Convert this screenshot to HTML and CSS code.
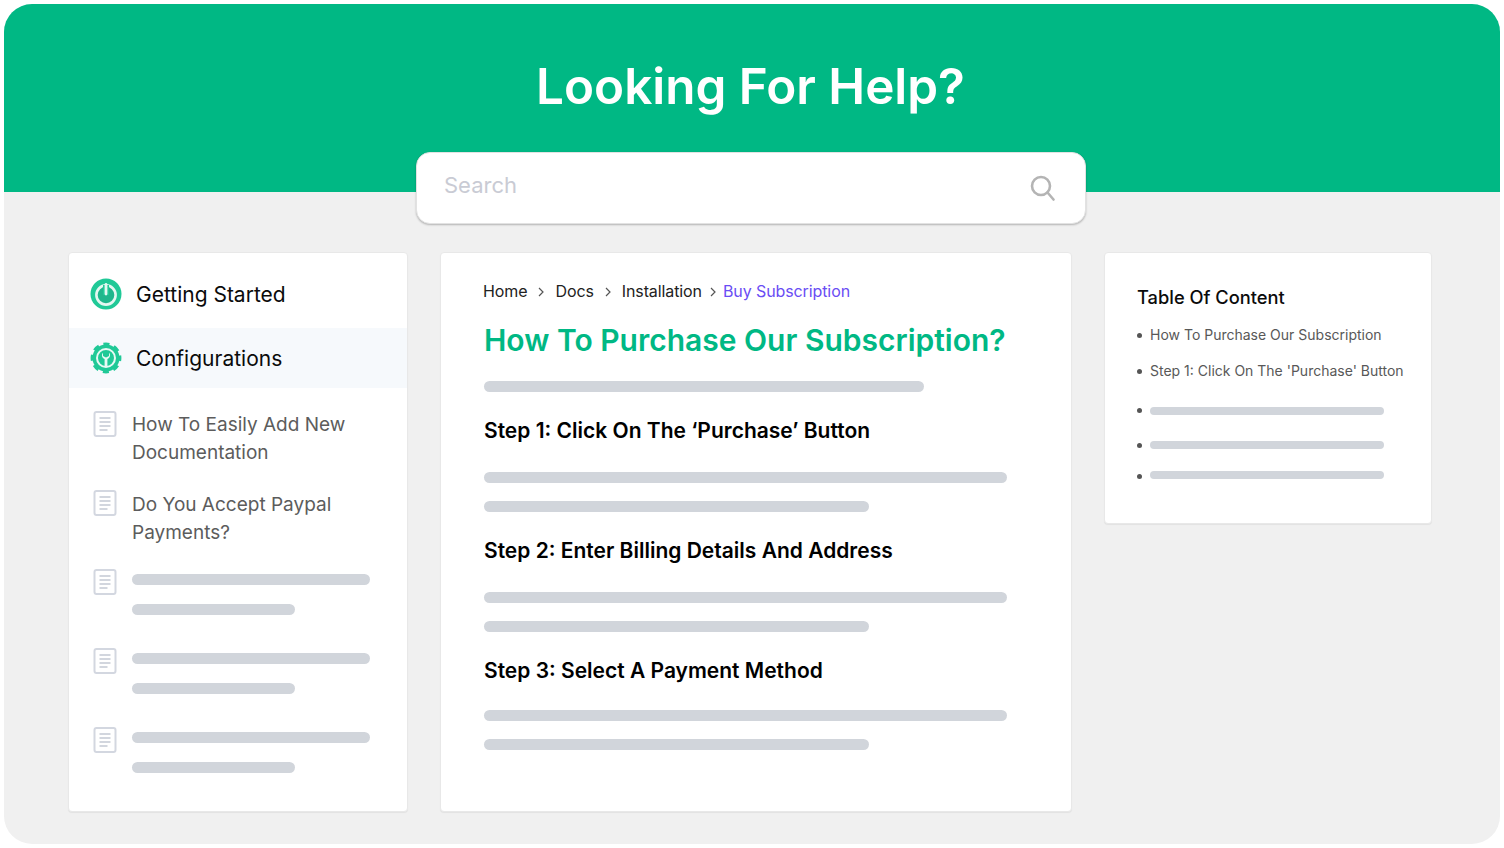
FILE: index.html
```html
<!DOCTYPE html>
<html lang="en">
<head>
    <meta charset="UTF-8">
    <meta name="viewport" content="width=device-width, initial-scale=1.0">
    <title>Looking For Help?</title>
    <link rel="stylesheet" href="styles.css">
</head>
<body>
    <div class="frame">
        <header class="hero">
            <h1>Looking For Help?</h1>
        </header>
        <div class="search-box">
            <span class="search-text">Search</span>
            <svg class="search-icon" width="26" height="26" viewBox="0 0 26 26" fill="none" stroke="#b4b4b4" stroke-width="2.6" stroke-linecap="round">
                <circle cx="11" cy="11" r="9"/>
                <path d="M17.500 17.500L23.500 24.500"/>
            </svg>
        </div>
        <div class="columns">
            <aside class="card side">
                <div class="cat">
                    <svg class="cat-icon" width="32" height="32" viewBox="0 0 32 32">
                        <circle cx="16" cy="16" r="15.500" fill="#20c997"/>
                        <circle cx="16" cy="17" r="9.600" fill="#1fb68c" stroke="#e4f7f1" stroke-width="2.600"/>
                        <path d="M16 7v10" stroke="#20c997" stroke-width="6"/>
                        <path d="M16 6.500V16" stroke="#e4f7f1" stroke-width="2.800" stroke-linecap="round"/>
                    </svg>
                    <span>Getting Started</span>
                </div>
                <div class="cat cat-active">
                    <svg class="cat-icon" width="32" height="32" viewBox="0 0 32 32">
                        <circle cx="16" cy="16" r="13.500" fill="#20c997"/>
                        <circle cx="16" cy="16" r="13.700" fill="none" stroke="#20c997" stroke-width="3.400" stroke-dasharray="6 4.760" stroke-dashoffset="3"/>
                        <circle cx="16" cy="16" r="9" fill="none" stroke="#e8f9f4" stroke-width="2"/>
                        <path d="M13 10.800v3.200l3 1.500 3-1.500v-3.200c1.800 2 1.300 4.800-1.600 6.300V24h-2.800v-6.900c-2.900-1.500-3.400-4.300-1.600-6.300z" fill="#e8f9f4"/>
                    </svg>
                    <span>Configurations</span>
                </div>
                <ul class="doc-list">
                    <li class="doc">
                        <svg class="doc-icon" width="24" height="28" viewBox="0 0 24 28" fill="none">
                            <rect x="1.500" y="2" width="21" height="24" rx="2" stroke="#d3d7e0" stroke-width="2"/>
                            <path d="M6.500 8h11M6.500 12h11M6.500 16h11M6.500 20h8" stroke="#c4c9d3" stroke-width="1.400"/>
                        </svg>
                        <span class="doc-text">How To Easily Add New Documentation</span>
                    </li>
                    <li class="doc">
                        <svg class="doc-icon" width="24" height="28" viewBox="0 0 24 28" fill="none">
                            <rect x="1.500" y="2" width="21" height="24" rx="2" stroke="#d3d7e0" stroke-width="2"/>
                            <path d="M6.500 8h11M6.500 12h11M6.500 16h11M6.500 20h8" stroke="#c4c9d3" stroke-width="1.400"/>
                        </svg>
                        <span class="doc-text doc-text-second">Do You Accept Paypal Payments?</span>
                    </li>
                    <li class="doc">
                        <svg class="doc-icon" width="24" height="28" viewBox="0 0 24 28" fill="none">
                            <rect x="1.500" y="2" width="21" height="24" rx="2" stroke="#d3d7e0" stroke-width="2"/>
                            <path d="M6.500 8h11M6.500 12h11M6.500 16h11M6.500 20h8" stroke="#c4c9d3" stroke-width="1.400"/>
                        </svg>
                        <div class="doc-bars">
                            <div class="bar bar-long"></div>
                            <div class="bar bar-short"></div>
                        </div>
                    </li>
                    <li class="doc">
                        <svg class="doc-icon" width="24" height="28" viewBox="0 0 24 28" fill="none">
                            <rect x="1.500" y="2" width="21" height="24" rx="2" stroke="#d3d7e0" stroke-width="2"/>
                            <path d="M6.500 8h11M6.500 12h11M6.500 16h11M6.500 20h8" stroke="#c4c9d3" stroke-width="1.400"/>
                        </svg>
                        <div class="doc-bars">
                            <div class="bar bar-long"></div>
                            <div class="bar bar-short"></div>
                        </div>
                    </li>
                    <li class="doc">
                        <svg class="doc-icon" width="24" height="28" viewBox="0 0 24 28" fill="none">
                            <rect x="1.500" y="2" width="21" height="24" rx="2" stroke="#d3d7e0" stroke-width="2"/>
                            <path d="M6.500 8h11M6.500 12h11M6.500 16h11M6.500 20h8" stroke="#c4c9d3" stroke-width="1.400"/>
                        </svg>
                        <div class="doc-bars">
                            <div class="bar bar-long"></div>
                            <div class="bar bar-short"></div>
                        </div>
                    </li>
                </ul>
            </aside>

            <main class="card article">
                <nav class="crumbs">
                    <span>Home</span>
                    <svg class="crumb-sep" width="6" height="10" viewBox="0 0 6 10" fill="none" stroke="#555" stroke-width="1.200"><path d="M1 1l4 4-4 4"/></svg>
                    <span>Docs</span>
                    <svg class="crumb-sep" width="6" height="10" viewBox="0 0 6 10" fill="none" stroke="#555" stroke-width="1.200"><path d="M1 1l4 4-4 4"/></svg>
                    <span>Installation</span>
                    <svg class="crumb-sep crumb-sep-last" width="6" height="10" viewBox="0 0 6 10" fill="none" stroke="#555" stroke-width="1.200"><path d="M1 1l4 4-4 4"/></svg>
                    <span class="crumb-current">Buy Subscription</span>
                </nav>
                <h2 class="article-title">How To Purchase Our Subscription?</h2>
                <div class="bar bar-intro"></div>
                <section class="step">
                    <h3>Step 1: Click On The ‘Purchase’ Button</h3>
                    <div class="bar bar-full"></div>
                    <div class="bar bar-mid"></div>
                </section>
                <section class="step">
                    <h3>Step 2: Enter Billing Details And Address</h3>
                    <div class="bar bar-full"></div>
                    <div class="bar bar-mid"></div>
                </section>
                <section class="step step-last">
                    <h3>Step 3: Select A Payment Method</h3>
                    <div class="bar bar-full"></div>
                    <div class="bar bar-mid"></div>
                </section>
            </main>

            <aside class="card toc">
                <h4>Table Of Content</h4>
                <ul class="toc-list">
                    <li class="toc-text">How To Purchase Our Subscription</li>
                    <li class="toc-text">Step 1: Click On The 'Purchase' Button</li>
                    <li class="toc-bar toc-bar-a"><div class="bar"></div></li>
                    <li class="toc-bar toc-bar-b"><div class="bar"></div></li>
                    <li class="toc-bar toc-bar-c"><div class="bar"></div></li>
                </ul>
            </aside>
        </div>
    </div>
</body>
</html>
```

FILE: styles.css
```css
* {
    box-sizing: border-box;
}
body {
    margin: 0;
    background: #fff;
    font-family: Inter, "Liberation Sans", sans-serif;
    overflow: hidden;
}
h1, h2, h3, h4, ul {
    margin: 0;
    padding: 0;
}
ul {
    list-style: none;
}
.frame {
    width: 1496px;
    height: 840px;
    margin: 4px;
    background: #f0f0f0;
    border-radius: 28px;
    overflow: hidden;
}
.hero {
    height: 188px;
    background: #00b884;
    padding: 52px 3px 0 0;
    text-align: center;
}
.hero h1 {
    font-size: 49.400px;
    line-height: 60px;
    font-weight: 600;
    color: #fff;
}
.search-box {
    width: 670px;
    height: 72px;
    margin: -40px 0 0 412px;
    padding: 0 28px 0 27px;
    background: #fff;
    border: 1px solid #e2e2e2;
    border-radius: 14px;
    box-shadow: 0 1px 2px rgba(0,0,0,0.25);
    display: flex;
    align-items: center;
    justify-content: space-between;
    position: relative;
}
.search-text {
    font-size: 22px;
    color: #c9cbd4;
    margin-top: -7px;
}
.search-icon {
    margin-right: 1px;
}
.columns {
    display: flex;
    align-items: flex-start;
    gap: 32px;
    margin: 28px 0 0 64px;
}
.card {
    background: #fff;
    border: 1px solid #e8e8e8;
    border-radius: 4px;
    box-shadow: 0 1px 1px rgba(0,0,0,0.06);
}
.bar {
    height: 11px;
    background: #d1d5db;
    border-radius: 6px;
}

/* left column */
.side {
    width: 340px;
    height: 560px;
    padding-top: 11px;
}
.cat {
    height: 60px;
    padding-left: 21px;
    display: flex;
    align-items: center;
    gap: 14px;
    font-size: 21px;
    color: #0b0b0b;
}
.cat-active {
    background: #f6f9fc;
    margin-top: 4px;
}
.doc-list {
    padding: 22px 0 0 24px;
}
.doc {
    height: 79px;
    display: flex;
    align-items: flex-start;
    gap: 15px;
}
.doc-icon {
    flex: none;
}
.doc-text {
    width: 230px;
    margin-top: 1px;
    font-size: 19px;
    line-height: 28px;
    color: #5c5c5c;
}
.doc-text-second {
    margin-top: 2px;
}
.doc-bars {
    width: 238px;
    padding-top: 6px;
}
.bar-long {
    width: 238px;
    margin-bottom: 19px;
}
.bar-short {
    width: 163px;
}

/* middle column */
.article {
    width: 632px;
    height: 560px;
    padding: 26px 0 0 43px;
}
.crumbs {
    display: flex;
    align-items: center;
    height: 24px;
    margin-left: -1px;
    font-size: 16px;
    letter-spacing: -0.1px;
    color: #222;
}
.crumb-sep {
    margin: 2px 11px 0;
}
.crumb-sep-last {
    margin: 2px 7px 0 8px;
}
.crumb-current {
    color: #6a4df4;
}
.article-title {
    margin-top: 15px;
    font-size: 30px;
    line-height: 44px;
    font-weight: 600;
    color: #00b884;
}
.bar-intro {
    width: 440px;
    margin-top: 19px;
}
.step {
    height: 120px;
}
.step h3 {
    padding-top: 25px;
    height: 80px;
    font-size: 21px;
    line-height: 27px;
    font-weight: 600;
    color: #000;
}
.step-last h3 {
    height: 78px;
}
.step .bar-mid {
    margin-top: 18px;
}
.bar-full {
    width: 523px;
}
.bar-mid {
    width: 385px;
}

/* right column */
.toc {
    width: 328px;
    height: 272px;
    padding: 31px 0 0 32px;
}
.toc h4 {
    font-size: 18.300px;
    line-height: 26px;
    font-weight: 500;
    color: #0b0b0b;
}
.toc-list {
    margin-top: 7px;
}
.toc-list li {
    position: relative;
    padding-left: 13px;
}
.toc-list li::before {
    content: "";
    position: absolute;
    left: 0;
    width: 5px;
    height: 5px;
    border-radius: 50%;
    background: #555;
}
.toc-text {
    height: 36px;
    line-height: 36px;
    font-size: 14px;
    color: #585858;
}
.toc-text::before {
    top: 16px;
}
.toc-bar {
    width: 247px;
}
.toc-bar .bar {
    height: 8px;
}
.toc-bar::before {
    top: 1px;
}
.toc-bar-a {
    margin-top: 18px;
}
.toc-bar-b {
    margin-top: 26px;
}
.toc-bar-b::before {
    top: 2px;
}
.toc-bar-c {
    margin-top: 22px;
}
.toc-bar-c::before {
    top: 3px;
}
```
